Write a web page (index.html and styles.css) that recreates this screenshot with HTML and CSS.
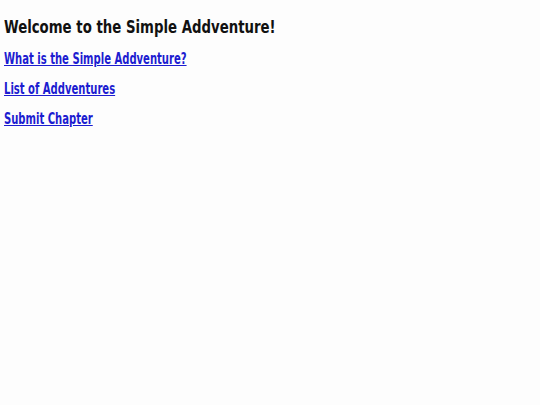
FILE: index.html
```html
<!DOCTYPE html>
<html>
<head>
<meta charset="utf-8">
<link rel="stylesheet" href="styles.css">
</head>
<body>
<h1 class="title">Welcome to the Simple Addventure!</h1>
<p class="item"><a href="#">What is the Simple Addventure?</a></p>
<p class="item"><a href="#">List of Addventures</a></p>
<p class="item"><a href="#">Submit Chapter</a></p>
</body>
</html>
```
FILE: styles.css
```css
html { background: #fdfdfd; }
body {
  margin: 4px;
  font-family: "DejaVu Sans", sans-serif;
  font-stretch: condensed;
  font-weight: bold;
}
.title {
  font-size: 17.5px;
  line-height: 21px;
  margin: 13px 0 12px;
  color: #111;
  transform: scaleX(0.845);
  transform-origin: left center;
}
.item {
  font-size: 16px;
  line-height: 18px;
  margin: 0 0 12px;
  transform: scaleX(0.697);
  transform-origin: left center;
}
.item a { color: #1c1cd0; }
```
